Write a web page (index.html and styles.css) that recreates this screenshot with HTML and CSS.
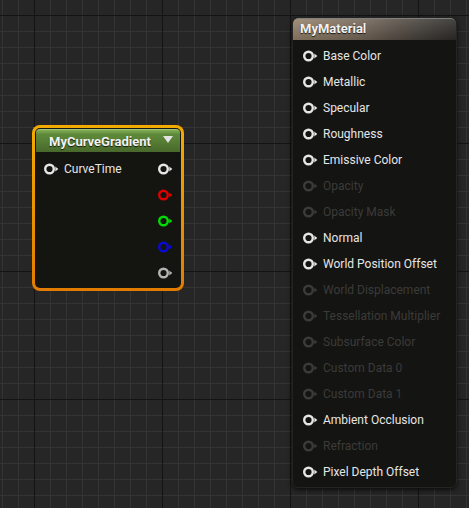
FILE: index.html
```html
<!DOCTYPE html>
<html>
<head>
<meta charset="utf-8">
<link rel="stylesheet" href="styles.css">
</head>
<body>
<div class="canvas">
  <div class="node curve">
    <div class="curve-inner">
      <div class="curve-head">
        <span class="title">MyCurveGradient</span>
        <span class="tri"></span>
      </div>
      <div class="curve-body">
        <div class="crow">
          <div class="pin-in">
            <svg class="pin" width="17" height="12" viewBox="0 0 17 12"><circle cx="6.5" cy="6" r="4.3" fill="none" stroke="#e6e6e6" stroke-width="2.4"/><polygon points="12.3,3.4 15.3,6 12.3,8.6" fill="#e6e6e6"/></svg>
            <span class="clabel">CurveTime</span>
          </div>
          <svg class="pin" width="17" height="12" viewBox="0 0 17 12"><circle cx="6.5" cy="6" r="4.3" fill="none" stroke="#e6e6e6" stroke-width="2.4"/><polygon points="12.3,3.4 15.3,6 12.3,8.6" fill="#e6e6e6"/></svg>
        </div>
        <div class="crow end">
          <svg class="pin" width="17" height="12" viewBox="0 0 17 12"><circle cx="6.5" cy="6" r="4.3" fill="none" stroke="#e00000" stroke-width="2.4"/><polygon points="12.3,3.4 15.3,6 12.3,8.6" fill="#e00000"/></svg>
        </div>
        <div class="crow end">
          <svg class="pin" width="17" height="12" viewBox="0 0 17 12"><circle cx="6.5" cy="6" r="4.3" fill="none" stroke="#00dc00" stroke-width="2.4"/><polygon points="12.3,3.4 15.3,6 12.3,8.6" fill="#00dc00"/></svg>
        </div>
        <div class="crow end">
          <svg class="pin" width="17" height="12" viewBox="0 0 17 12"><circle cx="6.5" cy="6" r="4.3" fill="none" stroke="#0a0ad8" stroke-width="2.4"/><polygon points="12.3,3.4 15.3,6 12.3,8.6" fill="#0a0ad8"/></svg>
        </div>
        <div class="crow end">
          <svg class="pin" width="17" height="12" viewBox="0 0 17 12"><circle cx="6.5" cy="6" r="4.3" fill="none" stroke="#b4b4b4" stroke-width="2.4"/><polygon points="12.3,3.4 15.3,6 12.3,8.6" fill="#b4b4b4"/></svg>
        </div>
      </div>
    </div>
  </div>

  <div class="node material">
    <div class="mat-head"><span class="title">MyMaterial</span></div>
    <div class="mat-body">
      <div class="mrow"><svg class="pin" width="17" height="12" viewBox="0 0 17 12"><circle cx="6.5" cy="6" r="4.3" fill="none" stroke="currentColor" stroke-width="2.4"/><polygon points="12.3,3.4 15.3,6 12.3,8.6" fill="currentColor"/></svg><span>Base Color</span></div>
      <div class="mrow"><svg class="pin" width="17" height="12" viewBox="0 0 17 12"><circle cx="6.5" cy="6" r="4.3" fill="none" stroke="currentColor" stroke-width="2.4"/><polygon points="12.3,3.4 15.3,6 12.3,8.6" fill="currentColor"/></svg><span>Metallic</span></div>
      <div class="mrow"><svg class="pin" width="17" height="12" viewBox="0 0 17 12"><circle cx="6.5" cy="6" r="4.3" fill="none" stroke="currentColor" stroke-width="2.4"/><polygon points="12.3,3.4 15.3,6 12.3,8.6" fill="currentColor"/></svg><span>Specular</span></div>
      <div class="mrow"><svg class="pin" width="17" height="12" viewBox="0 0 17 12"><circle cx="6.5" cy="6" r="4.3" fill="none" stroke="currentColor" stroke-width="2.4"/><polygon points="12.3,3.4 15.3,6 12.3,8.6" fill="currentColor"/></svg><span>Roughness</span></div>
      <div class="mrow"><svg class="pin" width="17" height="12" viewBox="0 0 17 12"><circle cx="6.5" cy="6" r="4.3" fill="none" stroke="currentColor" stroke-width="2.4"/><polygon points="12.3,3.4 15.3,6 12.3,8.6" fill="currentColor"/></svg><span>Emissive Color</span></div>
      <div class="mrow off"><svg class="pin" width="17" height="12" viewBox="0 0 17 12"><circle cx="6.5" cy="6" r="4.3" fill="none" stroke="currentColor" stroke-width="2.4"/><polygon points="12.3,3.4 15.3,6 12.3,8.6" fill="currentColor"/></svg><span>Opacity</span></div>
      <div class="mrow off"><svg class="pin" width="17" height="12" viewBox="0 0 17 12"><circle cx="6.5" cy="6" r="4.3" fill="none" stroke="currentColor" stroke-width="2.4"/><polygon points="12.3,3.4 15.3,6 12.3,8.6" fill="currentColor"/></svg><span>Opacity Mask</span></div>
      <div class="mrow"><svg class="pin" width="17" height="12" viewBox="0 0 17 12"><circle cx="6.5" cy="6" r="4.3" fill="none" stroke="currentColor" stroke-width="2.4"/><polygon points="12.3,3.4 15.3,6 12.3,8.6" fill="currentColor"/></svg><span>Normal</span></div>
      <div class="mrow"><svg class="pin" width="17" height="12" viewBox="0 0 17 12"><circle cx="6.5" cy="6" r="4.3" fill="none" stroke="currentColor" stroke-width="2.4"/><polygon points="12.3,3.4 15.3,6 12.3,8.6" fill="currentColor"/></svg><span>World Position Offset</span></div>
      <div class="mrow off"><svg class="pin" width="17" height="12" viewBox="0 0 17 12"><circle cx="6.5" cy="6" r="4.3" fill="none" stroke="currentColor" stroke-width="2.4"/><polygon points="12.3,3.4 15.3,6 12.3,8.6" fill="currentColor"/></svg><span>World Displacement</span></div>
      <div class="mrow off"><svg class="pin" width="17" height="12" viewBox="0 0 17 12"><circle cx="6.5" cy="6" r="4.3" fill="none" stroke="currentColor" stroke-width="2.4"/><polygon points="12.3,3.4 15.3,6 12.3,8.6" fill="currentColor"/></svg><span>Tessellation Multiplier</span></div>
      <div class="mrow off"><svg class="pin" width="17" height="12" viewBox="0 0 17 12"><circle cx="6.5" cy="6" r="4.3" fill="none" stroke="currentColor" stroke-width="2.4"/><polygon points="12.3,3.4 15.3,6 12.3,8.6" fill="currentColor"/></svg><span>Subsurface Color</span></div>
      <div class="mrow off"><svg class="pin" width="17" height="12" viewBox="0 0 17 12"><circle cx="6.5" cy="6" r="4.3" fill="none" stroke="currentColor" stroke-width="2.4"/><polygon points="12.3,3.4 15.3,6 12.3,8.6" fill="currentColor"/></svg><span>Custom Data 0</span></div>
      <div class="mrow off"><svg class="pin" width="17" height="12" viewBox="0 0 17 12"><circle cx="6.5" cy="6" r="4.3" fill="none" stroke="currentColor" stroke-width="2.4"/><polygon points="12.3,3.4 15.3,6 12.3,8.6" fill="currentColor"/></svg><span>Custom Data 1</span></div>
      <div class="mrow"><svg class="pin" width="17" height="12" viewBox="0 0 17 12"><circle cx="6.5" cy="6" r="4.3" fill="none" stroke="currentColor" stroke-width="2.4"/><polygon points="12.3,3.4 15.3,6 12.3,8.6" fill="currentColor"/></svg><span>Ambient Occlusion</span></div>
      <div class="mrow off"><svg class="pin" width="17" height="12" viewBox="0 0 17 12"><circle cx="6.5" cy="6" r="4.3" fill="none" stroke="currentColor" stroke-width="2.4"/><polygon points="12.3,3.4 15.3,6 12.3,8.6" fill="currentColor"/></svg><span>Refraction</span></div>
      <div class="mrow"><svg class="pin" width="17" height="12" viewBox="0 0 17 12"><circle cx="6.5" cy="6" r="4.3" fill="none" stroke="currentColor" stroke-width="2.4"/><polygon points="12.3,3.4 15.3,6 12.3,8.6" fill="currentColor"/></svg><span>Pixel Depth Offset</span></div>
    </div>
  </div>
</div>
</body>
</html>
```

FILE: styles.css
```css
html, body {
  margin: 0;
  padding: 0;
}
body {
  width: 469px;
  height: 508px;
  overflow: hidden;
  font-family: Roboto, "Liberation Sans", sans-serif;
}
.canvas {
  position: relative;
  width: 469px;
  height: 508px;
  background-color: #262626;
  background-image:
    linear-gradient(to right, #141414 1px, transparent 1px),
    linear-gradient(to bottom, #141414 1px, transparent 1px),
    linear-gradient(to right, #343434 1px, transparent 1px),
    linear-gradient(to bottom, #343434 1px, transparent 1px);
  background-size: 128px 128px, 128px 128px, 16px 16px, 16px 16px;
  background-position: 34px 0, 0 15px, 2px 0, 0 15px;
}
.node {
  position: absolute;
}
.title {
  color: #f2f2f2;
  font-weight: bold;
  font-size: 13px;
  text-shadow: 0 1px 1px rgba(0,0,0,0.8);
}
.pin {
  display: block;
  flex: none;
}

/* curve node */
.curve {
  left: 32px;
  top: 125px;
  width: 152px;
  height: 166px;
  box-sizing: border-box;
  padding: 3px;
  border-radius: 8px;
  background: linear-gradient(to bottom, #f3ab00, #e27c00);
}
.curve-inner {
  height: 100%;
  box-sizing: border-box;
  border-radius: 5px;
  background: #141511;
  padding: 1px;
  display: flex;
  flex-direction: column;
}
.curve-head {
  height: 22px;
  border-radius: 4px 4px 0 0;
  background: linear-gradient(to bottom, #82ad56 0%, #5f8a3a 20%, #48692c 100%);
  display: flex;
  align-items: center;
  justify-content: space-between;
  padding: 0 7px 0 13px;
  border-top: 1px solid #9fc77a;
}
.tri {
  width: 0;
  height: 0;
  border-left: 5px solid transparent;
  border-right: 5px solid transparent;
  border-top: 7px solid #e2e2e2;
  margin-top: -3px;
}
.curve-body {
  padding-top: 4px;
  display: flex;
  flex-direction: column;
}
.crow {
  height: 26px;
  display: flex;
  align-items: center;
  justify-content: space-between;
  padding: 0 6px 0 7px;
}
.crow.end {
  justify-content: flex-end;
}
.pin-in {
  display: flex;
  align-items: center;
  gap: 4px;
}
.clabel {
  color: #e6e6e6;
  font-size: 12px;
}

/* material node */
.material {
  left: 292px;
  top: 17px;
  width: 165px;
  height: 471px;
  box-sizing: border-box;
  border-radius: 6px;
  background: #141412;
  border: 1px solid #242422;
  box-shadow: 0 2px 5px rgba(0,0,0,0.7);
  display: flex;
  flex-direction: column;
  overflow: hidden;
}
.mat-head {
  height: 22px;
  box-sizing: border-box;
  padding-bottom: 2px;
  flex: none;
  display: flex;
  align-items: center;
  padding-left: 7px;
  background:
    linear-gradient(to bottom, rgba(255,255,255,0.12), rgba(0,0,0,0.15)),
    linear-gradient(to right, #948169 0%, #76685a 40%, #443f39 78%, #2c2b29 100%);
  border-top: 1px solid #7f7f7f;
  border-radius: 5px 5px 0 0;
}
.mat-body {
  padding-top: 3px;
  display: flex;
  flex-direction: column;
}
.mrow {
  height: 26px;
  display: flex;
  align-items: center;
  gap: 4px;
  padding-left: 9px;
  color: #e6e6e6;
  font-size: 12px;
}
.mrow.off {
  color: #3b3b39;
}
```
